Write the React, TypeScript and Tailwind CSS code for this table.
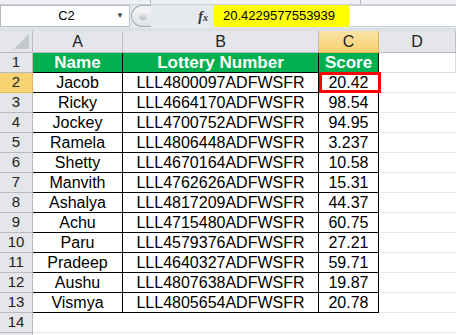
const rows = [
  ['Jacob', 'LLL4800097ADFWSFR', '20.42'],
  ['Ricky', 'LLL4664170ADFWSFR', '98.54'],
  ['Jockey', 'LLL4700752ADFWSFR', '94.95'],
  ['Ramela', 'LLL4806448ADFWSFR', '3.237'],
  ['Shetty', 'LLL4670164ADFWSFR', '10.58'],
  ['Manvith', 'LLL4762626ADFWSFR', '15.31'],
  ['Ashalya', 'LLL4817209ADFWSFR', '44.37'],
  ['Achu', 'LLL4715480ADFWSFR', '60.75'],
  ['Paru', 'LLL4579376ADFWSFR', '27.21'],
  ['Pradeep', 'LLL4640327ADFWSFR', '59.71'],
  ['Aushu', 'LLL4807638ADFWSFR', '19.87'],
  ['Vismya', 'LLL4805654ADFWSFR', '20.78'],
];

const font = "font-['Liberation_Sans',Arial,sans-serif]";

const FormulaBar = () => (
  <div className="flex h-[23px] bg-[#e6e9ed]">
    <div className="flex h-[22px] w-[130px] items-center border border-[#b7bcc3] bg-white">
      <span className="flex-1 pl-[16px] text-center text-[13px] text-black">C2</span>
      <span className="mr-[5px] text-[8px] text-[#444]">▼</span>
    </div>
    <div className="relative flex h-[22px] w-[84px] items-center">
      <div className="ml-[1px] h-[22px] w-[20px] rounded-l-full border border-r-0 border-[#a9aeb5] bg-gradient-to-b from-[#f4f5f7] to-[#dfe2e6]" />
      <div className="absolute left-[9px] top-[7px] h-[8px] w-[8px] rounded-full bg-gradient-to-b from-[#f3f3f3] to-[#b9bcc0]" />
      <span className="ml-auto mr-[6px] font-['Liberation_Serif',serif] text-[14px] font-bold italic text-[#333]">
        f<span className="text-[10px]">x</span>
      </span>
    </div>
    <div className="flex h-[22px] w-[135px] items-center bg-[#ffff00] pl-[9px] text-[13px] text-black">
      20.4229577553939
    </div>
    <div className="h-[22px] flex-1 border-y border-[#cdd1d6] bg-white" />
  </div>
);

export default function App() {
  return (
    <div className={`${font} h-[335px] w-[456px] overflow-hidden bg-white`}>
      <div className="relative h-[5px] border-b border-[#cdd1d6] bg-[#eef0f3]">
        <div className="absolute left-[150px] top-0 h-full w-px bg-[#b5bac1]" />
        <div className="absolute left-[360px] top-0 h-full w-px bg-[#b5bac1]" />
      </div>
      <FormulaBar />
      <div className="h-[3px] bg-[#dde0e4]" />
      <div className="grid grid-cols-[33px_90px_196px_60px_1fr] text-[16px]">
        <div className="relative h-[22px] border-b border-r border-[#b8bcc2] bg-[#e4e6ea]">
          <div className="absolute bottom-[3px] right-[3px] h-0 w-0 border-b-[15px] border-l-[15px] border-b-[#c4c8cd] border-l-transparent" />
        </div>
        {['A', 'B', 'C', 'D'].map((c) => (
          <div
            key={c}
            className={`flex h-[22px] items-center justify-center border-b border-r text-[#222] ${
              c === 'C'
                ? 'border-[#e2b352] bg-gradient-to-b from-[#fbe3a6] to-[#f6cf6c]'
                : 'border-[#b8bcc2] bg-[#e4e6ea]'
            }`}
          >
            {c}
          </div>
        ))}

        <div className="flex h-[20px] items-center justify-center border-b border-r border-[#b8bcc2] bg-[#e4e6ea] text-[15px] text-[#222]">
          1
        </div>
        {['Name', 'Lottery Number', 'Score'].map((h) => (
          <div
            key={h}
            className="flex h-[20px] items-center justify-center border-b border-r border-black bg-[#00b050] text-[17px] font-bold text-white"
          >
            {h}
          </div>
        ))}
        <div className="h-[20px] border-b border-r border-[#dadcdf]" />

        {rows.map(([name, lottery, score], i) => (
          <Row key={name} n={i + 2} name={name} lottery={lottery} score={score} />
        ))}

        <div className="flex h-[20px] items-center justify-center border-b border-r border-[#b8bcc2] bg-[#e4e6ea] text-[15px] text-[#222]">
          14
        </div>
        <div className="col-span-4 h-[20px] border-b border-[#e6e7e9]" />
        <div className="h-[20px] border-r border-[#b8bcc2] bg-[#e4e6ea]" />
      </div>
    </div>
  );
}

const Row = ({ n, name, lottery, score }: { n: number; name: string; lottery: string; score: string }) => {
  const active = n === 2;
  return (
    <>
      <div
        className={`flex h-[20px] items-center justify-center border-b border-r text-[15px] text-[#222] ${
          active ? 'border-[#e2b352] bg-[#f9d372]' : 'border-[#b8bcc2] bg-[#e4e6ea]'
        }`}
      >
        {n}
      </div>
      <div className="flex h-[20px] items-center justify-center border-b border-r border-black text-black">{name}</div>
      <div className="flex h-[20px] items-center justify-center border-b border-r border-black text-black">{lottery}</div>
      <div className="relative flex h-[20px] items-center justify-center border-b border-r border-black text-black">
        {score}
        {active && <div className="absolute -bottom-px -right-[3px] -top-px left-0 border-[3px] border-[#ff0000]" />}
      </div>
      <div className="h-[20px] border-b border-[#e6e7e9]" />
    </>
  );
};
